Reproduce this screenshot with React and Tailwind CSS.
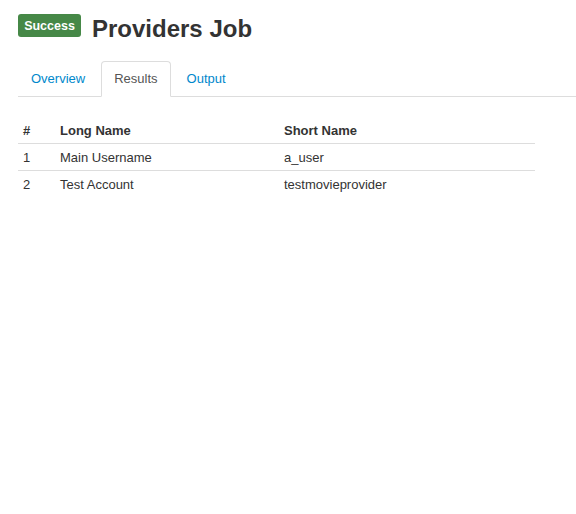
import React, { useState } from "react";

const rows = [
  { id: 1, longName: "Main Username", shortName: "a_user" },
  { id: 2, longName: "Test Account", shortName: "testmovieprovider" },
];

const tabs = ["Overview", "Results", "Output"];

const App = () => {
  const [activeTab, setActiveTab] = useState("Results");

  return (
    <div
      className="min-h-screen bg-white pl-[18px] text-[#333]"
      style={{ fontFamily: '"Liberation Sans", Arial, sans-serif' }}
    >
      {/* Header */}
      <div className="flex items-start pt-[14px]">
        <span className="flex h-[23px] w-[63px] items-center justify-center rounded-[3px] bg-[#468847] pt-[2px] text-[12.5px] font-bold text-white">
          Success
        </span>
        <h1 className="ml-[11px] mt-px text-[24px] font-bold leading-[28px] text-[#333]">
          Providers Job
        </h1>
      </div>

      {/* Tabs */}
      <ul className="mt-[18px] flex border-b border-[#ddd]">
        {tabs.map((tab) => (
          <li key={tab} className="-mb-px mr-[3px]">
            <button
              onClick={() => setActiveTab(tab)}
              className={`h-[36px] rounded-t-[4px] border px-[12px] text-[13px] leading-[34px] ${
                activeTab === tab
                  ? "border-[#ddd] border-b-white bg-white text-[#555]"
                  : "border-transparent text-[#0088cc]"
              }`}
            >
              {tab}
            </button>
          </li>
        ))}
      </ul>

      {/* Results table */}
      <table className="mt-[20px] w-[517px] border-collapse text-left text-[13px]">
        <thead>
          <tr>
            <th className="w-[37px] px-[5px] pt-[6px] pb-[4px] font-bold leading-[16px]">#</th>
            <th className="w-[224px] px-[5px] pt-[6px] pb-[4px] font-bold leading-[16px]">Long Name</th>
            <th className="px-[5px] pt-[6px] pb-[4px] font-bold leading-[16px]">Short Name</th>
          </tr>
        </thead>
        <tbody>
          {rows.map((row) => (
            <tr key={row.id}>
              <td className="border-t border-[#ddd] px-[5px] pt-[6px] pb-[4px] leading-[16px]">{row.id}</td>
              <td className="border-t border-[#ddd] px-[5px] pt-[6px] pb-[4px] leading-[16px]">{row.longName}</td>
              <td className="border-t border-[#ddd] px-[5px] pt-[6px] pb-[4px] leading-[16px]">{row.shortName}</td>
            </tr>
          ))}
        </tbody>
      </table>
    </div>
  );
};

export default App;
